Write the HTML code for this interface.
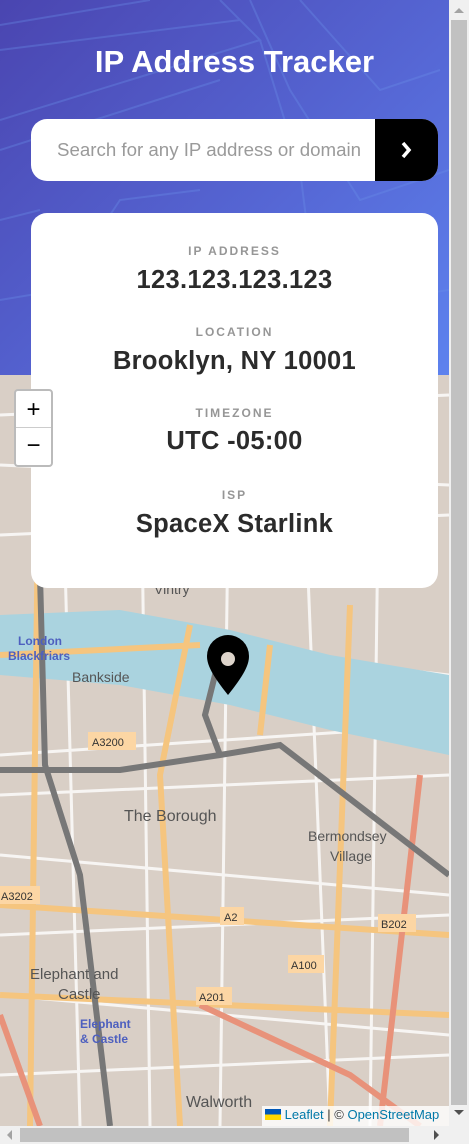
<!DOCTYPE html>
<html><head><meta charset="utf-8"><style>
*{margin:0;padding:0;box-sizing:border-box}
body{width:469px;height:1144px;overflow:hidden;font-family:"Liberation Sans",sans-serif;background:#ddd5cc;position:relative}
.hdr{position:absolute;left:0;top:0;width:449px;height:375px;background:linear-gradient(135deg,#4a45b0 0%,#5668d6 60%,#5d82ee 100%);overflow:hidden}
h1{position:absolute;top:44px;left:0;width:469px;text-align:center;color:#fff;font-size:31px;font-weight:bold}
.search{position:absolute;left:31px;top:119px;width:407px;height:62px;background:#fff;border-radius:16px;overflow:hidden}
.search span{position:absolute;left:26px;top:20px;color:#9a9a9a;font-size:18.7px}
.search .btn{position:absolute;right:0;top:0;width:63px;height:62px;background:#000}
.card{position:absolute;left:31px;top:213px;width:407px;height:375px;background:#fff;border-radius:16px;text-align:center;z-index:3}
.lab{position:absolute;width:100%;color:#969696;font-size:12px;font-weight:bold;letter-spacing:2px}
.val{position:absolute;width:100%;color:#2b2b2b;font-size:25.5px;font-weight:bold;letter-spacing:.3px}
.map{position:absolute;left:0;top:375px;width:449px;height:751px}
.zoom{position:absolute;left:14px;top:389px;width:39px;height:78px;background:#fff;border:2px solid #bbb;border-radius:4px;z-index:4;font-size:24px;text-align:center;color:#000}
.vs{position:absolute;left:449px;top:0;width:20px;height:1126px;background:#f0f0f0}
.hs{position:absolute;left:0;top:1126px;width:469px;height:18px;background:#f0f0f0}
.attr{position:absolute;left:262px;top:1106px;width:187px;height:20px;background:rgba(255,255,255,.8);font-size:13px;color:#333;padding:1px 0 0 3px;white-space:nowrap;overflow:hidden}
.attr a{color:#0078a8}
</style></head><body>
<div class="hdr">
<svg width="449" height="375" style="position:absolute;left:0;top:0" fill="none" stroke="#6a8fe8" stroke-opacity=".35" stroke-width="2">
<path d="M0 25 L150 0 M0 50 L240 20 L260 40 L0 120 M0 150 L220 80 M40 210 L0 220 M220 0 L260 40 L300 170 L310 250 L330 375 M300 0 L380 90 L440 70 M250 0 L290 90 L360 200 L449 170 M0 300 L60 290 L120 200 L200 190 M60 300 L40 375 M380 300 L449 290"/>
</svg>
</div>
<h1>IP Address Tracker</h1>
<div class="search"><span>Search for any IP address or domain</span><div class="btn">
<svg width="63" height="62"><path d="M28 24 L34 31 L28 38" stroke="#fff" stroke-width="3.5" fill="none"/></svg></div></div>
<div class="map">
<svg width="449" height="751">
<rect width="449" height="751" fill="#d9cfc6"/>
<g stroke="#fff" stroke-width="3" opacity=".8">
<path d="M0 40 L449 20 M0 90 L449 110 M0 160 L449 140 M0 420 L449 400 M0 480 L449 520 M0 560 L449 540 M0 620 L449 660 M0 700 L449 680 M60 0 L80 751 M140 0 L150 751 M230 0 L220 751 M300 0 L330 751 M380 0 L370 751 M0 250 L449 300 M0 380 L449 350"/>
</g>
<path d="M0 240 L120 235 L230 255 L330 280 L449 300 L449 380 L330 355 L230 330 L120 310 L0 300 Z" fill="#aad3df"/>
<g fill="none" stroke="#f5c57f" stroke-width="6">
<path d="M40 0 L30 751 M190 250 L160 400 L180 751 M270 270 L260 360 M350 230 L330 751 M0 620 L449 640 M0 280 L200 270 M0 530 L449 560"/>
</g>
<g fill="none" stroke="#e8927a" stroke-width="6"><path d="M420 400 L380 751 M0 640 L40 751 M200 630 L350 700 L420 751"/></g>
<g fill="none" stroke="#777" stroke-width="6"><path d="M40 200 L45 390 L80 500 L110 751 M220 280 L205 340 L220 380 L280 370 L449 500 M0 395 L120 395 L220 380"/></g>
<g font-family="Liberation Sans,sans-serif" font-size="14" fill="#555"><text x="72" y="307">Bankside</text><text x="154" y="219">Vintry</text><text x="124" y="446" font-size="16">The Borough</text><text x="308" y="466">Bermondsey</text><text x="330" y="486">Village</text><text x="30" y="604" font-size="15">Elephant and</text><text x="58" y="624" font-size="15">Castle</text><text x="186" y="732" font-size="16">Walworth</text></g>
<g font-family="Liberation Sans,sans-serif" font-size="12" fill="#4d5fbf" font-weight="bold"><text x="18" y="270">London</text><text x="8" y="285">Blackfriars</text><text x="80" y="653">Elephant</text><text x="80" y="668">&amp; Castle</text></g>
<g font-family="Liberation Sans,sans-serif" font-size="11" fill="#333"><rect x="88" y="357" width="48" height="18" fill="#fcd6a4"/><text x="92" y="371">A3200</text><rect x="0" y="511" width="40" height="18" fill="#fcd6a4"/><text x="1" y="525">A3202</text><rect x="220" y="532" width="24" height="18" fill="#fcd6a4"/><text x="224" y="546">A2</text><rect x="378" y="539" width="38" height="18" fill="#fcd6a4"/><text x="381" y="553">B202</text><rect x="196" y="612" width="36" height="18" fill="#fcd6a4"/><text x="199" y="626">A201</text><rect x="288" y="580" width="36" height="18" fill="#fcd6a4"/><text x="291" y="594">A100</text></g>
<path d="M228 320 C212 300 207 290 207 281 A21 21 0 0 1 249 281 C249 290 244 300 228 320 Z" fill="#000"/>
<circle cx="228" cy="284" r="7" fill="#ddd4cb"/>
</svg>
</div>
<div class="card">
<div class="lab" style="top:31px">IP ADDRESS</div><div class="val" style="top:53px">123.123.123.123</div>
<div class="lab" style="top:112px">LOCATION</div><div class="val" style="top:134px">Brooklyn, NY 10001</div>
<div class="lab" style="top:193px">TIMEZONE</div><div class="val" style="top:214px">UTC -05:00</div>
<div class="lab" style="top:275px">ISP</div><div class="val" style="top:297px">SpaceX Starlink</div>
</div>
<div class="zoom"><div style="height:37px;line-height:37px;border-bottom:1px solid #ccc">+</div><div style="line-height:36px">−</div></div>
<div class="attr"><span style="display:inline-block;width:16px;height:11px;background:linear-gradient(#0057b7 50%,#ffd700 50%);vertical-align:-1px"></span> <a>Leaflet</a> | © <a>OpenStreetMap</a></div>
<div class="vs"><div style="position:absolute;left:2px;top:20px;width:16px;height:1085px;background:#c1c1c1"></div><div style="position:absolute;left:5px;top:8px;border:5px solid transparent;border-bottom-color:#a3a3a3;border-top:0"></div><div style="position:absolute;left:5px;top:1110px;border:5px solid transparent;border-top-color:#505050;border-bottom:0"></div></div>
<div class="hs"><div style="position:absolute;left:20px;top:2px;width:389px;height:14px;background:#c1c1c1"></div><div style="position:absolute;left:7px;top:4px;border:5px solid transparent;border-right-color:#a3a3a3;border-left:0"></div><div style="position:absolute;left:434px;top:4px;border:5px solid transparent;border-left-color:#505050;border-right:0"></div></div>
</body></html>
